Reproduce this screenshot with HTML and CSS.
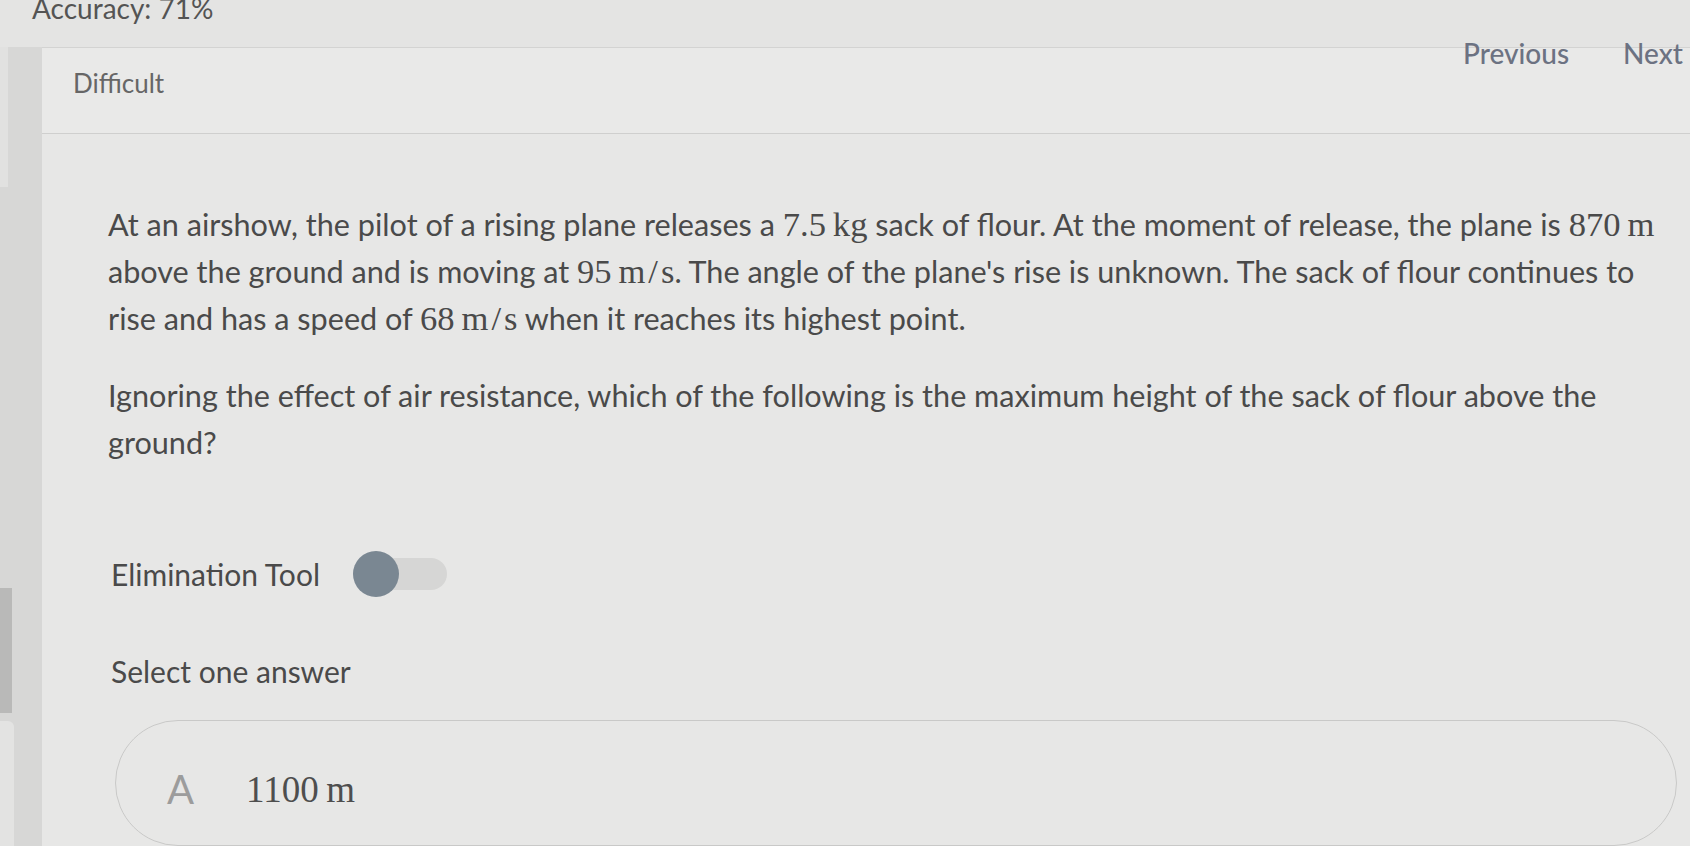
FILE: index.html
```html
<!DOCTYPE html>
<html lang="en">
<head>
<meta charset="utf-8">
<title>Question</title>
<link rel="stylesheet" href="styles.css">
</head>
<body>
<div class="topbar"><span class="accuracy">Accuracy: 71%</span></div>
<div class="layout">
  <aside class="sidebar">
    <div class="side-light"></div>
    <div class="side-dark"></div>
    <div class="side-tab"></div>
  </aside>
  <main class="main">
    <header class="qheader">
      <div class="difficulty">Difficult</div>
      <nav class="qnav">
        <span class="navlink">Previous</span>
        <span class="navlink">Next</span>
      </nav>
    </header>
    <section class="content">
      <p class="stem">At an airshow, the pilot of a rising plane releases a <span class="math">7.5&#8201;kg</span> sack of flour. At the moment of release, the plane is <span class="math">870&#8201;m</span> above the ground and is moving at <span class="math">95&#8201;m<span class="slash">/</span>s</span>. The angle of the plane's rise is unknown. The sack of flour continues to rise and has a speed of <span class="math">68&#8201;m<span class="slash">/</span>s</span> when it reaches its highest point.</p>
      <p class="stem second">Ignoring the effect of air resistance, which of the following is the maximum height of the sack of flour above the ground?</p>
      <div class="elim">
        <span class="elim-label">Elimination Tool</span>
        <span class="toggle"><span class="knob"></span></span>
      </div>
      <div class="select">Select one answer</div>
      <div class="answer">
        <span class="letter">A</span>
        <span class="math answer-val">1100&#8201;m</span>
      </div>
    </section>
  </main>
</div>
</body>
</html>
```
FILE: styles.css
```css
html, body {
  margin: 0;
  padding: 0;
}
body {
  background: #e7e7e6;
  font-family: Lato, "Open Sans", sans-serif;
  color: #4a4a4a;
  width: 1690px;
  height: 846px;
  overflow: hidden;
}
.topbar {
  height: 47px;
  background: #e4e4e3;
  padding-left: 32px;
}
.accuracy {
  display: block;
  font-size: 28px;
  line-height: 16px;
  color: #545454;
}
.layout {
  display: flex;
  height: 799px;
}
.sidebar {
  width: 42px;
  flex: none;
  background: #d7d7d6;
  display: flex;
  flex-direction: column;
}
.side-light {
  width: 8px;
  height: 140px;
  background: #e1e1e0;
}
.side-dark {
  width: 12px;
  height: 125px;
  margin-top: 401px;
  background: #b9b9b8;
}
.side-tab {
  width: 14px;
  flex: 1;
  margin-top: 8px;
  background: #e3e3e2;
  border-top-right-radius: 6px;
}
.main {
  flex: 1;
  min-width: 0;
  display: flex;
  flex-direction: column;
}
.qheader {
  height: 87px;
  border-top: 1px solid #d3d3d2;
  border-bottom: 1px solid #cfcfce;
  background: #e9e9e8;
  display: flex;
  justify-content: space-between;
  align-items: flex-start;
  padding: 0 7px 0 31px;
}
.difficulty {
  font-size: 26px;
  color: #666;
  margin-top: 19px;
}
.qnav {
  display: flex;
  gap: 54px;
  margin-top: -12px;
}
.navlink {
  font-size: 28px;
  color: #6c7282;
  font-weight: 500;
}
.content {
  padding: 0 20px 0 66px;
}
.stem {
  margin: 67px 0 0;
  font-size: 30.6px;
  line-height: 47px;
  color: #4a4a4a;
}
.stem.second {
  margin-top: 30px;
}
.math {
  font-family: "Liberation Serif", "Times New Roman", serif;
  font-size: 1.13em;
  color: #4a4a4a;
}
.slash {
  padding: 0 3px;
}
.elim {
  display: flex;
  align-items: center;
  gap: 33px;
  margin-top: 84px;
  padding-left: 3px;
  height: 47px;
}
.elim-label {
  font-size: 30px;
}
.toggle {
  width: 94px;
  height: 32px;
  border-radius: 16px;
  background: #d6d6d5;
  display: flex;
  align-items: center;
}
.knob {
  width: 46px;
  height: 46px;
  border-radius: 50%;
  background: #7a8792;
}
.select {
  margin-top: 51px;
  padding-left: 3px;
  font-size: 30px;
  line-height: 47px;
}
.answer {
  margin-top: 25px;
  margin-left: 7px;
  width: 1562px;
  height: 126px;
  border: 1.5px solid #c9c9c8;
  border-radius: 63px;
  box-sizing: border-box;
  display: flex;
  align-items: center;
  padding: 12px 0 0 51px;
  gap: 52px;
}
.letter {
  font-size: 40px;
  color: #9c9c9c;
}
.answer-val {
  font-size: 37px;
  color: #4e4e4e;
}
```
